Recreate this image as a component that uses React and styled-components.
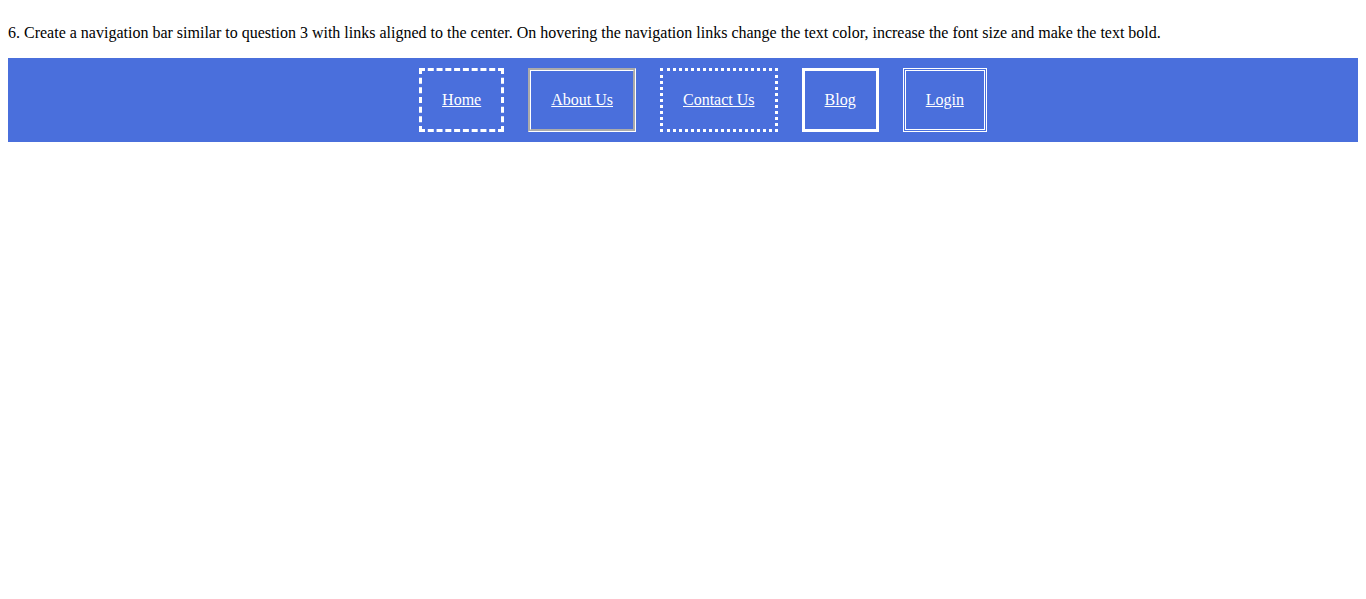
import React from 'react';
import styled, {createGlobalStyle} from 'styled-components';

const GlobalStyle = createGlobalStyle`
  body {
    margin: 0;
    padding: 8px;
    font-family: "Liberation Serif", "Times New Roman", serif;
    font-size: 16px;
    color: #000;
    background: #fff;
  }
`;

const Question = styled.p`
  margin: 16px 0;
  line-height: 18px;
`;

const NavBar = styled.nav`
  background: #4a6fdc;
  padding: 10px 0;
`;

const NavList = styled.ul`
  list-style: none;
  margin: 0;
  padding: 0 0 0 40px;
  display: flex;
  justify-content: center;
  gap: 24px;
`;

const NavItem = styled.li`
  display: block;
`;

const NavLink = styled.a`
  display: block;
  padding: 20px;
  line-height: 18px;
  color: #fff;
  text-decoration: underline;
  border: 3px ${props => props.$border} white;
  &:hover {
    color: #ffd54f;
    font-size: 1.2em;
    font-weight: bold;
  }
`;

const links = [
  {label: 'Home', border: 'dashed'},
  {label: 'About Us', border: 'groove'},
  {label: 'Contact Us', border: 'dotted'},
  {label: 'Blog', border: 'solid'},
  {label: 'Login', border: 'double'},
];

const App = () => (
  <>
    <GlobalStyle />
    <Question>
      6. Create a navigation bar similar to question 3 with links aligned to the center. On hovering the navigation links change the text color, increase the font size and make the text bold.
    </Question>
    <NavBar>
      <NavList>
        { links.map(link =>
          <NavItem key={link.label}>
            <NavLink href="#" $border={link.border}>{ link.label }</NavLink>
          </NavItem>
        ) }
      </NavList>
    </NavBar>
  </>
);

export default App;
